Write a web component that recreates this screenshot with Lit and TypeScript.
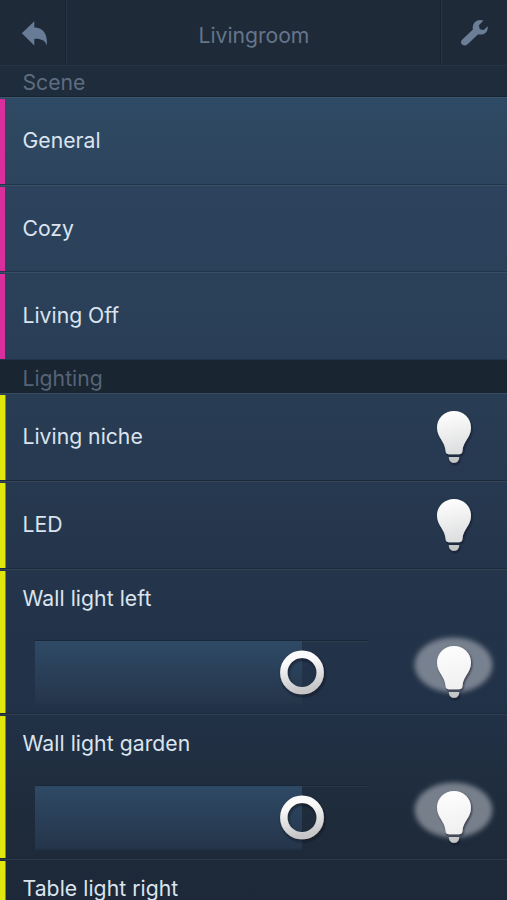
import { LitElement, html, css, svg, nothing } from "lit";
import { customElement, property } from "lit/decorators.js";

@customElement("light-bulb")
class LightBulb extends LitElement {
  @property({ type: Boolean }) lit = false;
  static styles = css`
    :host { display: block; width: 107px; height: 86px; }
    svg { display: block; overflow: visible; }
  `;
  render() {
    return html`<svg width="107" height="86" viewBox="0 0 107 86">
      <defs>
        <linearGradient id="glass" x1="0" y1="0" x2="0.15" y2="1">
          <stop offset="0.1" stop-color="#fdfdfd" />
          <stop offset="1" stop-color=${this.lit ? "#f0f0f0" : "#dedfe0"} />
        </linearGradient>
        <filter id="soft" x="-20%" y="-20%" width="140%" height="140%"><feGaussianBlur stdDeviation="2.8" /></filter>
        <filter id="drop" x="-30%" y="-30%" width="160%" height="160%">
          <feDropShadow dx="1" dy="1.5" stdDeviation="1.3" flood-color="#0c1420" flood-opacity="0.7" />
        </filter>
      </defs>
      ${this.lit
        ? svg`<ellipse cx="53.5" cy="37" rx="39" ry="27.5" fill="#9aa0aa" fill-opacity="0.72" filter="url(#soft)" />`
        : nothing}
      <g filter="url(#drop)">
        <path fill="url(#glass)" d="M54 18 C44.500 18 37 25.300 37 34.500 C37 44.500 44.800 48 45.500 57.500 C45.700 60 46.600 61.200 49 61.200 H59 C61.400 61.200 62.300 60 62.500 57.500 C63.200 48 71 44.500 71 34.500 C71 25.300 63.500 18 54 18 Z" />
        <path fill="#c6c7c7" d="M48.800 64 H59.200 C59.200 67.600 57 69.800 54 69.800 C51 69.800 48.800 67.600 48.800 64 Z" />
      </g>
    </svg>`;
  }
}

@customElement("dim-slider")
class DimSlider extends LitElement {
  @property({ type: Number }) value = 80;
  static styles = css`
    :host { display: block; width: 334px; height: 66px; }
    .track {
      position: relative; height: 65px;
      border-top: 1px solid #1a2738;
      background: linear-gradient(#ffffff0c 0 1px, transparent 1px);
    }
    .fill { height: 65px; background: linear-gradient(#2f4a66, #2a4059 45%, #25364b 95%, #25364b00); }
    .knob {
      position: absolute; top: 9px; width: 44px; height: 44px;
      margin-left: -22px;
    }
  `;
  render() {
    return html`<div class="track">
      <div class="fill" style="width:${this.value}%"></div>
      <svg class="knob" style="left:${this.value}%" viewBox="0 0 44 44" overflow="visible">
        <defs>
          <linearGradient id="ring" x1="0.3" y1="0" x2="0.5" y2="1">
            <stop offset="0.2" stop-color="#fbfbfb" />
            <stop offset="1" stop-color="#c6c5c7" />
          </linearGradient>
          <filter id="shade" x="-20%" y="-20%" width="150%" height="150%">
            <feDropShadow dx="1" dy="2" stdDeviation="1.5" flood-color="#0a121d" flood-opacity="0.7" />
          </filter>
        </defs>
        <circle cx="22" cy="22.4" r="18.2" fill="none" stroke="url(#ring)" stroke-width="7.400" filter="url(#shade)" />
      </svg>
    </div>`;
  }
}

interface Item { name: string; kind: "scene" | "switch" | "dimmer"; }

const scenes: Item[] = [
  { name: "General", kind: "scene" },
  { name: "Cozy", kind: "scene" },
  { name: "Living Off", kind: "scene" },
];
const lights: Item[] = [
  { name: "Living niche", kind: "switch" },
  { name: "LED", kind: "switch" },
  { name: "Wall light left", kind: "dimmer" },
  { name: "Wall light garden", kind: "dimmer" },
  { name: "Table light right", kind: "dimmer" },
];

@customElement("app-root")
class AppRoot extends LitElement {
  static styles = css`
    :host {
      display: flex; flex-direction: column; box-sizing: border-box;
      height: 900px; overflow: hidden;
      background: #1e2b39; color: #dbe4ee;
      font: 21.2px/26px Inter, "Liberation Sans", sans-serif;
    }
    header {
      display: grid; grid-template-columns: 65px 1fr 66px; flex: none;
      height: 66px; box-sizing: border-box; padding-bottom: 1px;
      border-bottom: 1px solid #253546; background: #1e2a38; color: #66758a;
    }
    .tool { display: block; width: 66px; height: 64px; }
    .title { display: flex; align-items: center; justify-content: center; padding: 6px 0 0 2px;
      border-left: 1px solid #182330; border-right: 1px solid #182330;
      box-shadow: inset 1px 0 #263646, 1px 0 #263646; letter-spacing: -0.05px; }
    .list { flex: 1; display: flex; flex-direction: column; min-height: 0;
      background: linear-gradient(#2f4a64 31px, #2d435d 130px, #293e56 300px, #25364c 480px, #213147 640px, #1f2c3c 740px, #1d2838 834px); }
    .group { flex: none; height: 31px; box-sizing: border-box; padding: 3px 22.500px 0;
      background: #1e2c3b; color: #5e6d80; border-bottom: 1px solid #192431; }
    .group.second { height: 33px; padding-top: 5px; background: #1a2532; color: #566477; }
    .row { display: flex; flex: none; height: 87.500px; box-sizing: border-box; align-items: center;
      border-top: 1px solid #ffffff12; border-bottom: 1px solid #1b293a; }
    .row.scene { border-bottom-color: #21344a; }
    .row.last { height: 88px; }
    .stripe { align-self: stretch; width: 5px; margin: 1px 17.500px 0 0; background: #d92f9c; flex: none; }
    .light .stripe { background: #e1e60d; box-shadow: 1px 0 #7f8a2b; }
    .name { flex: 1; white-space: nowrap; padding-bottom: 1.500px; }
    .row light-bulb { margin-top: -1px; }
    .row.dimmer { height: 145px; align-items: stretch; }
    .body { flex: 1; display: flex; flex-direction: column; padding-top: 15px; }
    .body dim-slider { margin: 29px 0 0 12.500px; }
    .dimmer .name { flex: none; padding: 0; letter-spacing: 0.05px; }
    .dimmer light-bulb { margin-top: 58px; }
  `;

  private row(item: Item, last = false) {
    if (item.kind === "dimmer")
      return html`<div class="row light dimmer">
        <div class="stripe"></div>
        <div class="body"><div class="name">${item.name}</div><dim-slider value="80"></dim-slider></div>
        <light-bulb lit style=""></light-bulb>
      </div>`;
    return html`<div class="row ${item.kind === "scene" ? "scene" : "light"} ${last ? "last" : ""}">
      <div class="stripe"></div>
      <div class="name">${item.name}</div>
      ${item.kind === "switch" ? html`<light-bulb></light-bulb>` : nothing}
    </div>`;
  }

  render() {
    return html`
      <header>
        <svg class="tool" viewBox="0 0 66 64">
          <path fill="#687b97" d="M21.800 33.300 L34.300 21.200 V27.500 C43.500 27.500 47.500 34 47 45.500 C45 40.500 41.500 38.500 34.300 38.800 V45.500 Z" />
        </svg>
        <div class="title">Livingroom</div>
        <svg class="tool" viewBox="0 0 66 64">
          <path fill="#6c7d96" d="M42.500 20.600 L37.900 25.200 L38.800 29.200 L42.800 30.100 L46.600 26.200 C47.600 31.500 43.200 35.800 37.200 34.300 L26.300 44.500 C23.200 47.300 18.100 43.800 20.800 40.100 L31.900 29.600 C30.700 23.500 35.800 18.300 42.500 20.600 Z" />
        </svg>
      </header>
      <div class="list">
        <div class="group">Scene</div>
        ${scenes.map((s, i) => this.row(s, i === scenes.length - 1))}
        <div class="group second">Lighting</div>
        ${lights.map((l) => this.row(l, l.name === "LED"))}
      </div>`;
  }
}
